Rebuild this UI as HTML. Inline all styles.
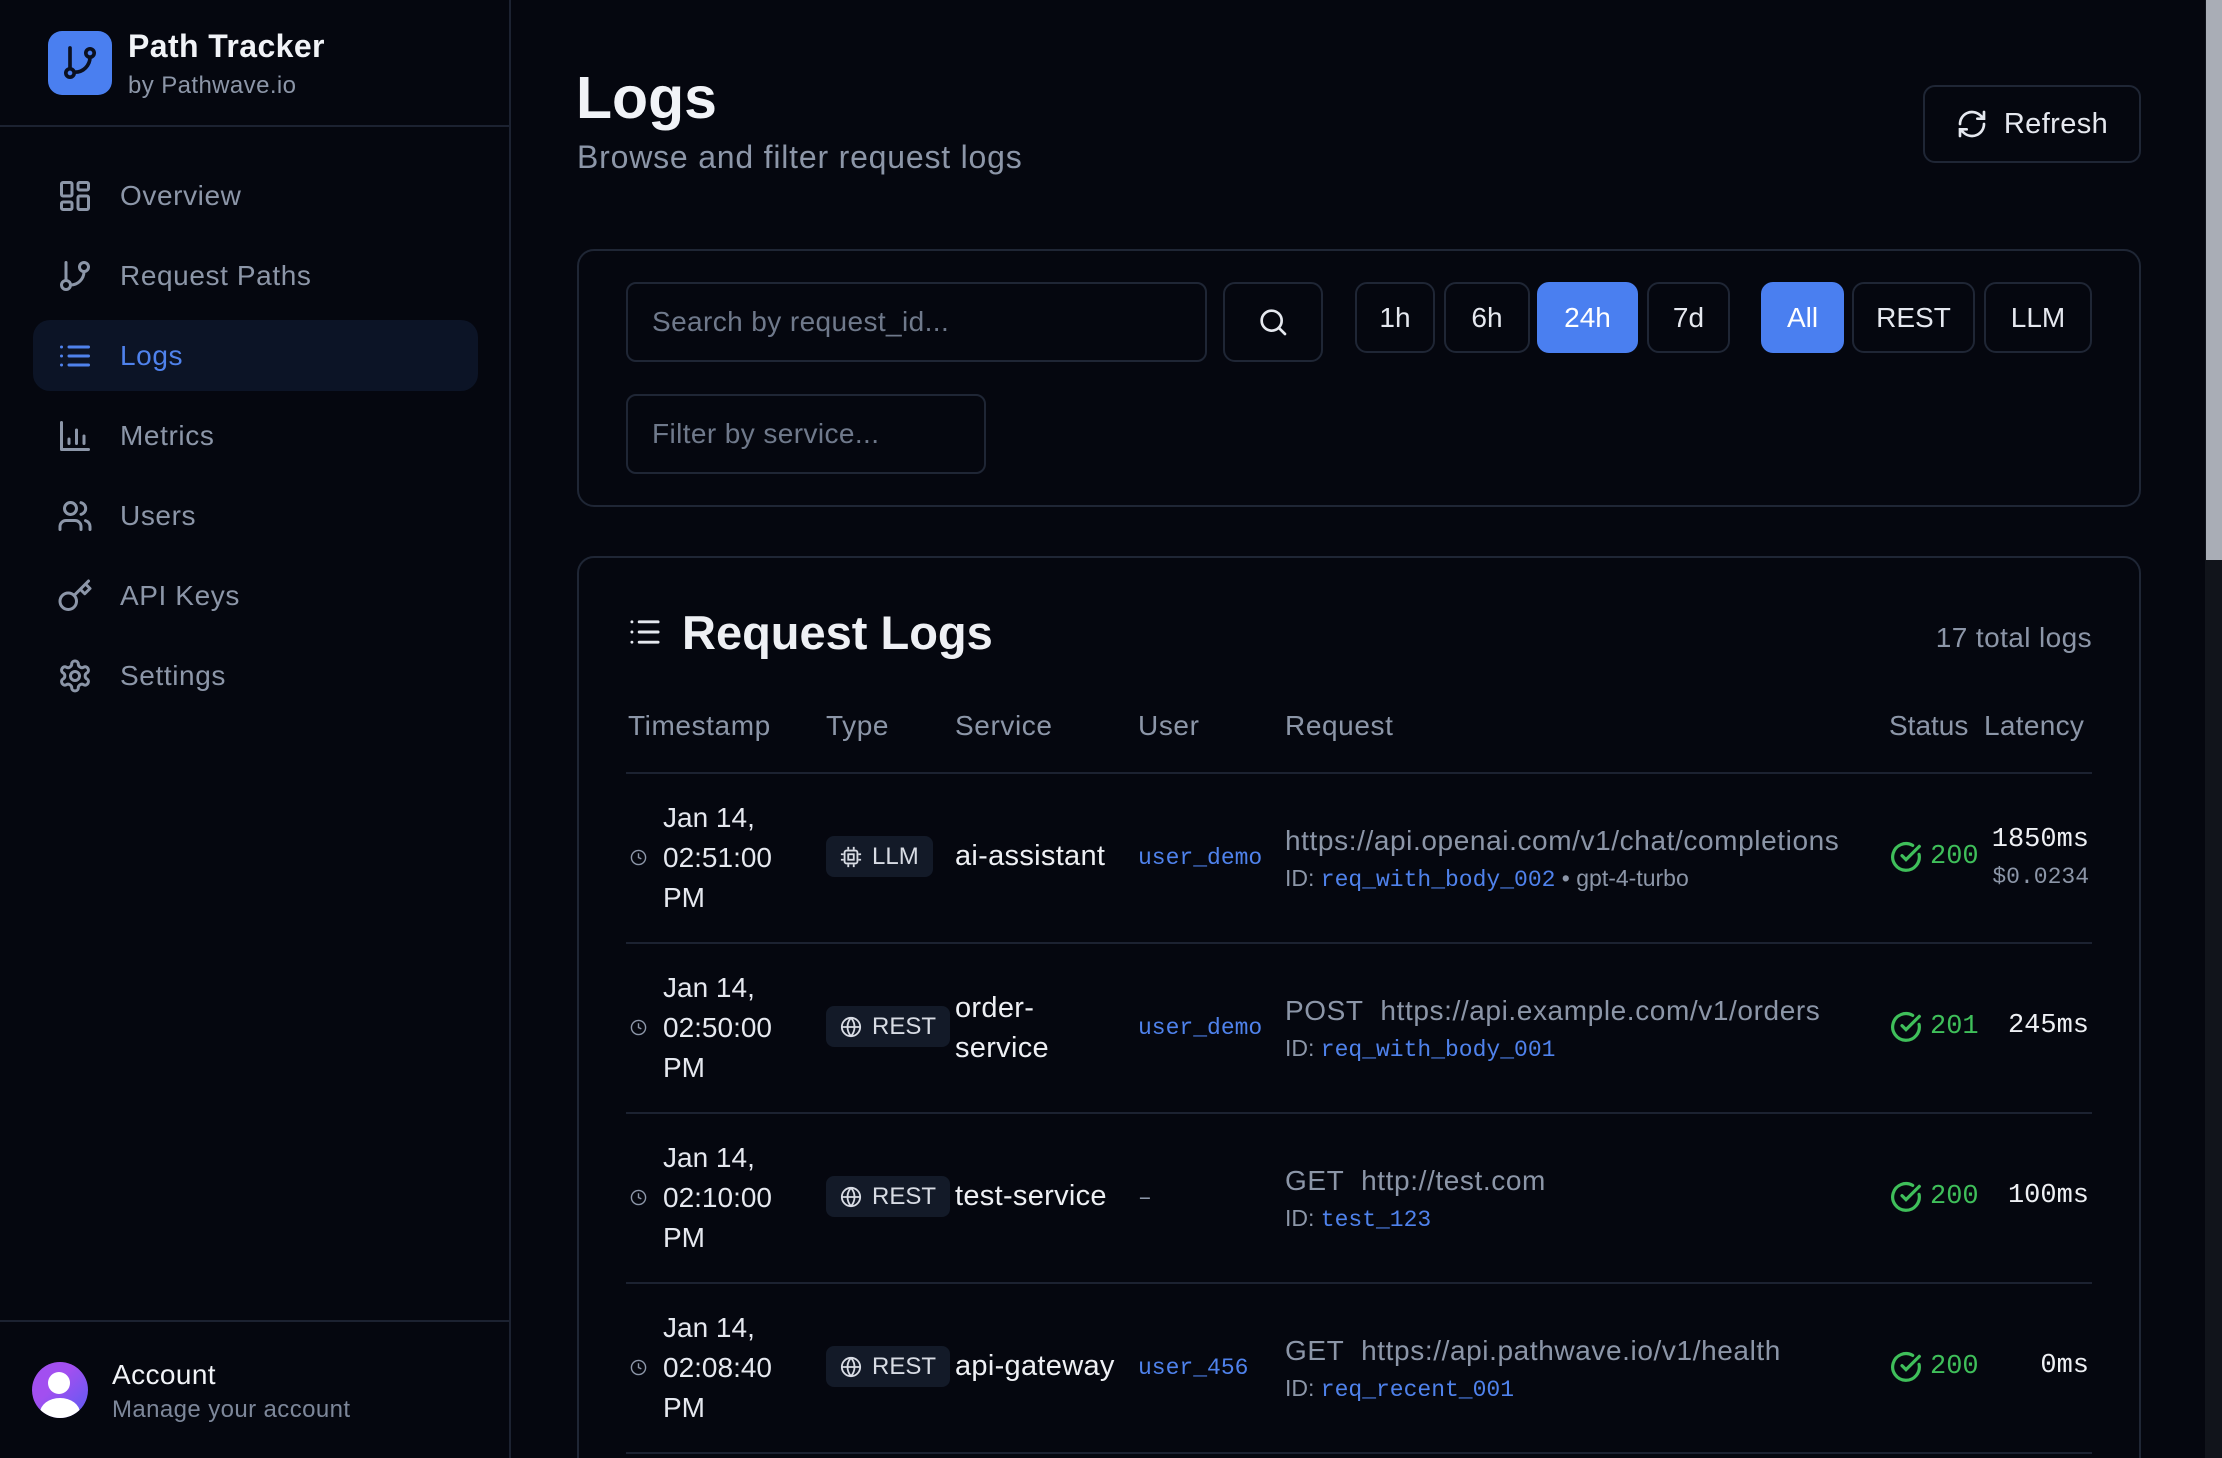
<!DOCTYPE html>
<html style="overflow:hidden;width:2222px;height:1458px"><head><meta charset="utf-8"><style>
*{box-sizing:border-box;margin:0;padding:0}
body{width:2222px;height:1458px;overflow:hidden;background:#05070f;font-family:"Liberation Sans",sans-serif;color:#e5e8ef;position:relative}
.a{position:absolute}
.side{left:0;top:0;width:511px;height:1458px;background:#05070f;border-right:2px solid #1c2231}
.nav{left:57px;width:420px;height:40px;display:flex;align-items:center;font-size:28px;letter-spacing:0.6px;color:#8c96a8}
.nav svg{width:36px;height:36px;margin-right:27px;fill:none;stroke:#8c96a8;stroke-width:2;stroke-linecap:round;stroke-linejoin:round}
.btn{border:2px solid #1f2635;border-radius:12px;display:flex;align-items:center;justify-content:center;font-size:28px;color:#e5e8ef}
.on{background:#4a7ff0;border-color:#4a7ff0;color:#fff}
.inp{border:2px solid #1f2635;border-radius:10px;font-size:28px;letter-spacing:0.4px;color:#6f798b;padding-left:24px;display:flex;align-items:center}
.th{font-size:28px;letter-spacing:0.6px;color:#8c96a8;top:710px}
.hr{left:626px;width:1466px;height:2px;background:#1c2231}
.ts{font-size:28px;line-height:40px;color:#e5e8ef;left:663px}
.badge{left:826px;height:41px;background:#131a28;border-radius:8px;display:flex;align-items:center;padding:0 14px;font-size:24px;color:#d8dce4}
.badge svg{width:22px;height:22px;margin-right:10px;fill:none;stroke:#d8dce4;stroke-width:2}
.svc{left:955px;font-size:29px;letter-spacing:0.3px;color:#eef0f4}
.usr{left:1138px;font-family:"Liberation Mono",monospace;font-size:23px;color:#4f82ec}
.url{left:1285px;font-size:28px;letter-spacing:0.6px;color:#8c96a8}
.id{left:1285px;font-size:23px;color:#8c96a8}
.id b{font-weight:normal;font-family:"Liberation Mono",monospace;color:#4f82ec}
.st{left:1890px;display:flex;align-items:center;font-family:"Liberation Mono",monospace;font-size:27px;color:#3fbf5a}
.st svg{width:32px;height:32px;margin-right:8px;fill:none;stroke:#3fbf5a;stroke-width:2.4;stroke-linecap:round}
.lat{right:133px;font-family:"Liberation Mono",monospace;font-size:27px;color:#eef0f4;text-align:right}
.clk{left:630px;width:17px;height:17px;fill:none;stroke:#8c96a8;stroke-width:2}
</style></head><body>
<div class="a side"></div>
<div class="a" style="left:48px;top:31px;width:64px;height:64px;background:#4a7ff0;border-radius:14px"></div>
<svg class="a" style="left:60px;top:43px" width="40" height="40" viewBox="0 0 24 24" fill="none" stroke="#0b1020" stroke-width="2.2" stroke-linecap="round"><path d="M6 3v12"/><circle cx="6" cy="18" r="2.5"/><circle cx="18" cy="6" r="2.5"/><path d="M18 8.5a9 9 0 0 1-9 9"/></svg>
<div class="a" style="left:128px;top:28px;font-size:32px;font-weight:bold;letter-spacing:0.4px;color:#f1f3f7">Path Tracker</div>
<div class="a" style="left:128px;top:72px;font-size:24px;letter-spacing:0.4px;color:#8c96a8">by Pathwave.io</div>
<div class="a" style="left:0;top:125px;width:511px;height:2px;background:#1c2231"></div>
<div class="a" style="left:33px;top:320px;width:445px;height:71px;background:#0c1426;border-radius:17px"></div>
<div class="a nav" style="top:176px"><svg viewBox="0 0 24 24"><rect x="3" y="3" width="7" height="9" rx="1"/><rect x="14" y="3" width="7" height="5" rx="1"/><rect x="14" y="12" width="7" height="9" rx="1"/><rect x="3" y="16" width="7" height="5" rx="1"/></svg>Overview</div>
<div class="a nav" style="top:256px"><svg viewBox="0 0 24 24"><path d="M6 3v12"/><circle cx="6" cy="18" r="3"/><circle cx="18" cy="6" r="3"/><path d="M18 9a9 9 0 0 1-9 9"/></svg>Request Paths</div>
<div class="a nav" style="top:336px;color:#4f82ec"><svg viewBox="0 0 24 24" style="stroke:#4f82ec"><path d="M8 6h13M8 12h13M8 18h13M3 6h.01M3 12h.01M3 18h.01"/></svg>Logs</div>
<div class="a nav" style="top:416px"><svg viewBox="0 0 24 24"><path d="M3 3v18h18M8 17v-3M13 17V8M18 17v-5"/></svg>Metrics</div>
<div class="a nav" style="top:496px"><svg viewBox="0 0 24 24"><path d="M16 21v-2a4 4 0 0 0-4-4H6a4 4 0 0 0-4 4v2"/><circle cx="9" cy="7" r="4"/><path d="M22 21v-2a4 4 0 0 0-3-3.9M16 3.1a4 4 0 0 1 0 7.8"/></svg>Users</div>
<div class="a nav" style="top:576px"><svg viewBox="0 0 24 24"><circle cx="7.5" cy="15.5" r="5.5"/><path d="M21 2l-9.6 9.6M15.5 7.5l3 3L22 7l-3-3"/></svg>API Keys</div>
<div class="a nav" style="top:656px"><svg viewBox="0 0 24 24"><path d="M12.2 2h-.4a2 2 0 0 0-2 2v.2a2 2 0 0 1-1 1.7l-.4.3a2 2 0 0 1-2 0l-.2-.1a2 2 0 0 0-2.7.7l-.2.4a2 2 0 0 0 .7 2.7l.2.1a2 2 0 0 1 1 1.7v.5a2 2 0 0 1-1 1.7l-.2.1a2 2 0 0 0-.7 2.7l.2.4a2 2 0 0 0 2.7.7l.2-.1a2 2 0 0 1 2 0l.4.3a2 2 0 0 1 1 1.7v.2a2 2 0 0 0 2 2h.4a2 2 0 0 0 2-2v-.2a2 2 0 0 1 1-1.7l.4-.3a2 2 0 0 1 2 0l.2.1a2 2 0 0 0 2.7-.7l.2-.4a2 2 0 0 0-.7-2.7l-.2-.1a2 2 0 0 1-1-1.7v-.5a2 2 0 0 1 1-1.7l.2-.1a2 2 0 0 0 .7-2.7l-.2-.4a2 2 0 0 0-2.7-.7l-.2.1a2 2 0 0 1-2 0l-.4-.3a2 2 0 0 1-1-1.7V4a2 2 0 0 0-2-2z"/><circle cx="12" cy="12" r="3"/></svg>Settings</div>
<div class="a" style="left:0;top:1320px;width:511px;height:2px;background:#1c2231"></div>
<div class="a" style="left:32px;top:1362px;width:56px;height:56px;border-radius:50%;background:linear-gradient(135deg,#a24ff0 40%,#5a5cf2);overflow:hidden">
<div class="a" style="left:16px;top:10px;width:22px;height:22px;border-radius:50%;background:#fff"></div>
<div class="a" style="left:8px;top:36px;width:40px;height:30px;border-radius:50%;background:#fff"></div></div>
<div class="a" style="left:112px;top:1359px;font-size:28px;letter-spacing:0.4px;color:#f1f3f7">Account</div>
<div class="a" style="left:112px;top:1396px;font-size:24px;letter-spacing:0.4px;color:#7d879a">Manage your account</div>

<div class="a" style="left:2205px;top:0;width:17px;height:1458px;background:#11141b"></div>
<div class="a" style="left:2206px;top:0;width:16px;height:560px;background:#a9adb6"></div>

<div class="a" style="left:576px;top:64px;font-size:59px;font-weight:bold;color:#f1f3f7">Logs</div>
<div class="a" style="left:577px;top:139px;font-size:32px;letter-spacing:0.8px;color:#8c96a8">Browse and filter request logs</div>
<div class="a btn" style="left:1923px;top:85px;width:218px;height:78px;font-size:29px;letter-spacing:0.4px"><svg width="32" height="32" viewBox="0 0 24 24" fill="none" stroke="#e5e8ef" stroke-width="2" stroke-linecap="round" style="margin-right:16px"><path d="M3 12a9 9 0 0 1 15-6.7L21 8M21 3v5h-5M21 12a9 9 0 0 1-15 6.7L3 16M3 21v-5h5"/></svg>Refresh</div>

<div class="a" style="left:577px;top:249px;width:1564px;height:258px;border:2px solid #1f2635;border-radius:17px"></div>
<div class="a inp" style="left:626px;top:282px;width:581px;height:80px">Search by request_id...</div>
<div class="a btn" style="left:1223px;top:282px;width:100px;height:80px"><svg width="32" height="32" viewBox="0 0 24 24" fill="none" stroke="#e5e8ef" stroke-width="2" stroke-linecap="round"><circle cx="11" cy="11" r="7.5"/><path d="M21 21l-4.3-4.3"/></svg></div>
<div class="a btn" style="left:1355px;top:282px;width:80px;height:71px">1h</div>
<div class="a btn" style="left:1444px;top:282px;width:86px;height:71px">6h</div>
<div class="a btn on" style="left:1537px;top:282px;width:101px;height:71px">24h</div>
<div class="a btn" style="left:1647px;top:282px;width:83px;height:71px">7d</div>
<div class="a btn on" style="left:1761px;top:282px;width:83px;height:71px">All</div>
<div class="a btn" style="left:1852px;top:282px;width:123px;height:71px">REST</div>
<div class="a btn" style="left:1984px;top:282px;width:108px;height:71px">LLM</div>
<div class="a inp" style="left:626px;top:394px;width:360px;height:80px">Filter by service...</div>

<div class="a" style="left:577px;top:556px;width:1564px;height:920px;border:2px solid #1f2635;border-radius:17px;clip-path:inset(0 0 18px 0)"></div>
<svg class="a" style="left:627px;top:616px" width="36" height="32" viewBox="0 0 24 22" fill="none" stroke="#e5e8ef" stroke-width="2" stroke-linecap="round"><path d="M8 4h13M8 11h13M8 18h13M3 4h.01M3 11h.01M3 18h.01"/></svg>
<div class="a" style="left:682px;top:605px;font-size:47px;font-weight:bold;color:#eef0f4">Request Logs</div>
<div class="a" style="right:130px;top:622px;font-size:28px;letter-spacing:0.4px;color:#8c96a8">17 total logs</div>
<div class="a th" style="left:628px">Timestamp</div>
<div class="a th" style="left:826px">Type</div>
<div class="a th" style="left:955px">Service</div>
<div class="a th" style="left:1138px">User</div>
<div class="a th" style="left:1285px">Request</div>
<div class="a th" style="left:1889px;letter-spacing:0">Status</div>
<div class="a th" style="left:1984px;letter-spacing:0.3px">Latency</div>
<div class="a hr" style="top:772px"></div>
<div class="a hr" style="top:942px"></div>
<div class="a hr" style="top:1112px"></div>
<div class="a hr" style="top:1282px"></div>
<div class="a hr" style="top:1452px"></div>

<!-- row 1 -->
<svg class="a clk" style="top:849px" viewBox="0 0 24 24"><circle cx="12" cy="12" r="10"/><path d="M12 6v6l4 2"/></svg>
<div class="a ts" style="top:798px">Jan 14,<br>02:51:00<br>PM</div>
<div class="a badge" style="top:836px"><svg viewBox="0 0 24 24"><rect x="5" y="5" width="14" height="14" rx="2"/><rect x="9" y="9" width="6" height="6"/><path d="M9 1v3M15 1v3M9 20v3M15 20v3M1 9h3M1 15h3M20 9h3M20 15h3"/></svg>LLM</div>
<div class="a svc" style="top:840px">ai-assistant</div>
<div class="a usr" style="top:845px">user_demo</div>
<div class="a url" style="top:825px">https://api.openai.com/v1/chat/completions</div>
<div class="a id" style="top:865px">ID: <b>req_with_body_002</b> • gpt-4-turbo</div>
<div class="a st" style="top:841px"><svg viewBox="0 0 24 24"><path d="M21.8 10A10 10 0 1 1 17 3.3"/><path d="M9 11l3 3L22 4"/></svg>200</div>
<div class="a lat" style="top:825px">1850ms</div>
<div class="a lat" style="top:864px;font-size:23px;color:#8c96a8">$0.0234</div>

<!-- row 2 -->
<svg class="a clk" style="top:1019px" viewBox="0 0 24 24"><circle cx="12" cy="12" r="10"/><path d="M12 6v6l4 2"/></svg>
<div class="a ts" style="top:968px">Jan 14,<br>02:50:00<br>PM</div>
<div class="a badge" style="top:1006px"><svg viewBox="0 0 24 24"><circle cx="12" cy="12" r="10"/><path d="M2 12h20M12 2a15 15 0 0 1 0 20M12 2a15 15 0 0 0 0 20"/></svg>REST</div>
<div class="a svc" style="top:988px;line-height:40px">order-<br>service</div>
<div class="a usr" style="top:1015px">user_demo</div>
<div class="a url" style="top:995px">POST&nbsp; https://api.example.com/v1/orders</div>
<div class="a id" style="top:1035px">ID: <b>req_with_body_001</b></div>
<div class="a st" style="top:1011px"><svg viewBox="0 0 24 24"><path d="M21.8 10A10 10 0 1 1 17 3.3"/><path d="M9 11l3 3L22 4"/></svg>201</div>
<div class="a lat" style="top:1011px">245ms</div>

<!-- row 3 -->
<svg class="a clk" style="top:1189px" viewBox="0 0 24 24"><circle cx="12" cy="12" r="10"/><path d="M12 6v6l4 2"/></svg>
<div class="a ts" style="top:1138px">Jan 14,<br>02:10:00<br>PM</div>
<div class="a badge" style="top:1176px"><svg viewBox="0 0 24 24"><circle cx="12" cy="12" r="10"/><path d="M2 12h20M12 2a15 15 0 0 1 0 20M12 2a15 15 0 0 0 0 20"/></svg>REST</div>
<div class="a svc" style="top:1180px">test-service</div>
<div class="a usr" style="top:1185px;color:#8c96a8">–</div>
<div class="a url" style="top:1165px">GET&nbsp; http://test.com</div>
<div class="a id" style="top:1205px">ID: <b>test_123</b></div>
<div class="a st" style="top:1181px"><svg viewBox="0 0 24 24"><path d="M21.8 10A10 10 0 1 1 17 3.3"/><path d="M9 11l3 3L22 4"/></svg>200</div>
<div class="a lat" style="top:1181px">100ms</div>

<!-- row 4 -->
<svg class="a clk" style="top:1359px" viewBox="0 0 24 24"><circle cx="12" cy="12" r="10"/><path d="M12 6v6l4 2"/></svg>
<div class="a ts" style="top:1308px">Jan 14,<br>02:08:40<br>PM</div>
<div class="a badge" style="top:1346px"><svg viewBox="0 0 24 24"><circle cx="12" cy="12" r="10"/><path d="M2 12h20M12 2a15 15 0 0 1 0 20M12 2a15 15 0 0 0 0 20"/></svg>REST</div>
<div class="a svc" style="top:1350px">api-gateway</div>
<div class="a usr" style="top:1355px">user_456</div>
<div class="a url" style="top:1335px">GET&nbsp; https://api.pathwave.io/v1/health</div>
<div class="a id" style="top:1375px">ID: <b>req_recent_001</b></div>
<div class="a st" style="top:1351px"><svg viewBox="0 0 24 24"><path d="M21.8 10A10 10 0 1 1 17 3.3"/><path d="M9 11l3 3L22 4"/></svg>200</div>
<div class="a lat" style="top:1351px">0ms</div>
</body></html>
